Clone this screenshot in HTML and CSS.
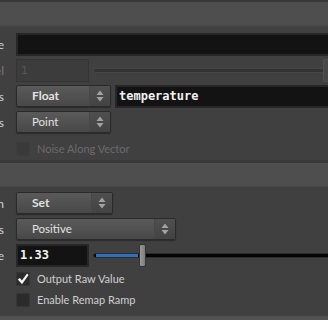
FILE: index.html
```html
<!DOCTYPE html>
<html lang="en">
<head>
<meta charset="UTF-8">
<title>Attribute Noise</title>
<link rel="stylesheet" href="styles.css">
</head>
<body>
    <div class="head head-first"></div>

    <!-- Attribute section -->
    <section class="params params-first">
        <div class="row">
            <span class="label">Attribute Name</span>
            <div class="field field-wide"></div>
        </div>
        <div class="row">
            <span class="label dim">Attribute Stride Level</span>
            <div class="field field-short field-off">1</div>
            <div class="slider slider-off">
                <div class="track"></div>
                <div class="knob knob-off"></div>
            </div>
        </div>
        <div class="row">
            <span class="label">Attributes</span>
            <div class="menu menu-float">
                <span class="menu-text bold">Float</span>
                <span class="menu-arrows"><svg width="8" height="12" viewBox="0 0 8 12"><path d="M4 0.5 L7.5 5 L0.5 5 Z M4 11.5 L7.5 7 L0.5 7 Z" fill="#a3a3a3"/></svg></span>
            </div>
            <div class="field field-wide mono">temperature</div>
        </div>
        <div class="row">
            <span class="label">Class</span>
            <div class="menu menu-float">
                <span class="menu-text">Point</span>
                <span class="menu-arrows"><svg width="8" height="12" viewBox="0 0 8 12"><path d="M4 0.5 L7.5 5 L0.5 5 Z M4 11.5 L7.5 7 L0.5 7 Z" fill="#a3a3a3"/></svg></span>
            </div>
        </div>
        <div class="row row-check row-check-first">
            <span class="label"></span>
            <span class="box box-off"></span>
            <span class="check-text dim">Noise Along Vector</span>
        </div>
    </section>

    <div class="head head-second"></div>

    <!-- Value section -->
    <section class="params params-second">
        <div class="row">
            <span class="label">Operation</span>
            <div class="menu menu-set">
                <span class="menu-text bold">Set</span>
                <span class="menu-arrows"><svg width="8" height="12" viewBox="0 0 8 12"><path d="M4 0.5 L7.5 5 L0.5 5 Z M4 11.5 L7.5 7 L0.5 7 Z" fill="#a3a3a3"/></svg></span>
            </div>
        </div>
        <div class="row">
            <span class="label">Range Values</span>
            <div class="menu menu-range">
                <span class="menu-text">Positive</span>
                <span class="menu-arrows"><svg width="8" height="12" viewBox="0 0 8 12"><path d="M4 0.5 L7.5 5 L0.5 5 Z M4 11.5 L7.5 7 L0.5 7 Z" fill="#a3a3a3"/></svg></span>
            </div>
        </div>
        <div class="row">
            <span class="label">Amplitude</span>
            <div class="field field-short mono">1.33</div>
            <div class="slider">
                <div class="track track-on"><div class="fill"></div></div>
                <div class="knob"></div>
            </div>
        </div>
        <div class="row row-check">
            <span class="label"></span>
            <span class="box"><svg width="12" height="12" viewBox="0 0 12 12"><path d="M0.8 6.6 L2.9 5 L4.9 7.6 L10 0.6 L11.6 2.1 L5 11.2 Z" fill="#f4f4f4"/></svg></span>
            <span class="check-text">Output Raw Value</span>
        </div>
        <div class="row row-check">
            <span class="label"></span>
            <span class="box"></span>
            <span class="check-text">Enable Remap Ramp</span>
        </div>
    </section>

    <div class="foot"></div>
</body>
</html>
```

FILE: styles.css
```css
body {
    margin: 0;
    background-color: #404040;
    color: #cbcbcb;
    font-family: Lato, "Liberation Sans", sans-serif;
    font-size: 11px;
    overflow: hidden;
}

.head {
    background-color: #4e4e4e;
    border-top: 2px solid #393939;
    border-bottom: 2px solid #474747;
    height: 23px;
}

.head-second {
    border-top-width: 3px;
    border-bottom-width: 1px;
}

.params-first {
    padding: 4px 0 1px;
}

.params-second {
    padding: 3px 0 6px;
}

.row {
    display: flex;
    align-items: center;
    height: 26px;
}

.row-check {
    height: 21px;
}

.row-check-first {
    margin-top: 3px;
}

/* labels are cut off by the left edge of the panel */
.label {
    width: 4px;
    margin-right: 12px;
    display: flex;
    justify-content: flex-end;
    overflow: hidden;
    white-space: nowrap;
    flex-shrink: 0;
    color: #d2d2d2;
    font-size: 12px;
}

.label.dim {
    color: #777;
}

.field {
    box-sizing: border-box;
    height: 23px;
    background-color: #131313;
    border: 2px solid #272727;
    padding-left: 2px;
    line-height: 19px;
    color: #f2f2f2;
    white-space: nowrap;
}

.field-wide {
    flex: 1;
    margin-right: -6px;
}

.field-short {
    width: 73px;
    flex-shrink: 0;
}

.field-off {
    background-color: #3c3c3c;
    border: 1px solid #343434;
    padding-left: 4px;
    line-height: 21px;
    color: #585858;
    font-family: "DejaVu Sans Mono", monospace;
}

.mono {
    font-family: "DejaVu Sans Mono", monospace;
    font-weight: bold;
    font-size: 12px;
}

.menu {
    box-sizing: border-box;
    display: flex;
    height: 22px;
    margin-right: 4px;
    border: 1px solid #2a2a2a;
    border-radius: 2px;
    background: linear-gradient(#5a5a5a, #484848);
    box-shadow: 0 1px 1px rgba(0, 0, 0, 0.35);
    flex-shrink: 0;
}

.menu-float {
    width: 95px;
}

.menu-set {
    width: 97px;
}

.menu-range {
    width: 160px;
}

.menu-text {
    flex: 1;
    padding-left: 15px;
    line-height: 20px;
    color: #e2e2e2;
    font-size: 11.5px;
}

.bold {
    font-weight: bold;
    font-size: 12px;
}

.menu-arrows {
    width: 20px;
    display: flex;
    align-items: center;
    justify-content: center;
    border-left: 1px solid #474747;
    background: linear-gradient(#4f4f4f, #434343);
    border-radius: 0 2px 2px 0;
}

.slider {
    position: relative;
    flex: 1;
    height: 23px;
    margin-left: 4px;
    margin-right: -20px;
    display: flex;
    align-items: center;
}

.track {
    flex: 1;
    height: 3px;
    background-color: #333;
    border: 1px solid #464646;
    border-radius: 3px;
}

.track-on {
    height: 3px;
    background-color: #050505;
    border-color: #2c2c2c;
    padding: 0 0 0 2px;
}

.fill {
    width: 42px;
    height: 3px;
    background-color: #2e6fc0;
}

.knob {
    position: absolute;
    left: 46px;
    top: 0;
    width: 5px;
    height: 21px;
    border: 1px solid #333;
    border-radius: 2px;
    background: linear-gradient(90deg, #9a9a9a, #7c7c7c);
}

.knob-off {
    left: 230px;
    background: #474747;
    border-color: #505050;
}

.box {
    box-sizing: border-box;
    width: 14px;
    height: 14px;
    background-color: #2b2b2b;
    border: 1px solid #363636;
    display: flex;
    align-items: center;
    justify-content: center;
    flex-shrink: 0;
}

.box-off {
    background-color: #3a3a3a;
    border-color: #3d3d3d;
}

.check-text {
    margin-left: 7px;
    color: #cfcfcf;
}

.check-text.dim {
    color: #6b6b6b;
}

.foot {
    height: 10px;
    background-color: #525252;
}
```
